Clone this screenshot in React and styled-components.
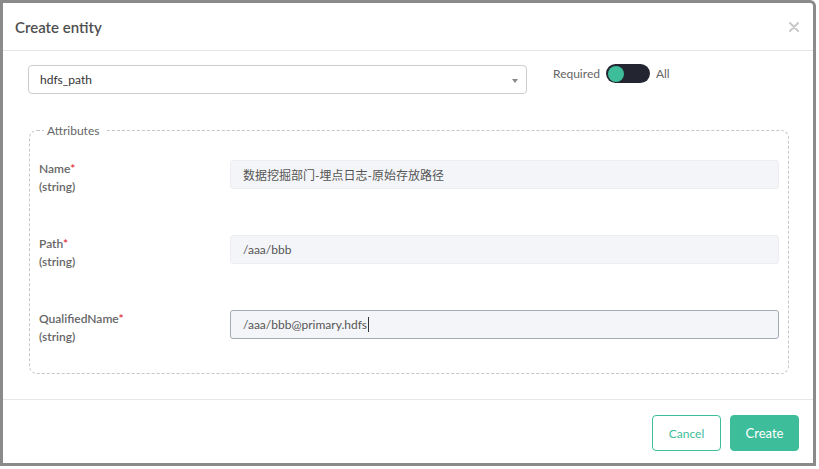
import React from "react";
import styled, { createGlobalStyle } from "styled-components";

const GlobalStyle = createGlobalStyle`
	html, body {
		margin: 0;
		padding: 0;
		background: #ffffff;
	}
	body {
		font-family: Lato, "Noto Sans", "Noto Sans CJK SC", sans-serif;
		color: #555;
	}
`;

const ACCENT = "#3dbd9a";

const fields = [
	{ name: "Name", type: "string", value: "数据挖掘部门-埋点日志-原始存放路径" },
	{ name: "Path", type: "string", value: "/aaa/bbb" },
	{ name: "QualifiedName", type: "string", value: "/aaa/bbb@primary.hdfs", focused: true },
];

const App = () => {
	return (
		<>
			<GlobalStyle />
			<Frame>
				<Modal>
					<Header>
						<Title>Create entity</Title>
						<CloseButton aria-label="Close">
							<svg width="10" height="10" viewBox="0 0 10 10">
								<path d="M1 1 L9 9 M9 1 L1 9" stroke="#c9c9c9" strokeWidth="2" strokeLinecap="round" />
							</svg>
						</CloseButton>
					</Header>

					<Body>
						<TopRow>
							<Select>
								<span>hdfs_path</span>
								<Caret />
							</Select>
							<ToggleGroup>
								<ToggleLabel>Required</ToggleLabel>
								<Toggle>
									<Knob />
								</Toggle>
								<ToggleLabel>All</ToggleLabel>
							</ToggleGroup>
						</TopRow>

						<Attributes>
							<Legend>Attributes</Legend>
							{fields.map((f) => (
								<FieldRow key={f.name}>
									<FieldLabel>
										<span>
											{f.name}
											<Required>*</Required>
										</span>
										<span>({f.type})</span>
									</FieldLabel>
									<FieldBox $focused={f.focused}>
										{f.value}
										{f.focused && <TextCursor />}
									</FieldBox>
								</FieldRow>
							))}
						</Attributes>
					</Body>

					<Footer>
						<Button>Cancel</Button>
						<Button $primary>Create</Button>
					</Footer>
				</Modal>
			</Frame>
		</>
	);
};

export default App;

const Frame = styled.div`
	width: 816px;
	height: 466px;
	box-sizing: border-box;
	border: 3px solid #8a8a8a;
	border-top-right-radius: 6px;
	background: #ffffff;
	overflow: hidden;
`;

const Modal = styled.div`
	display: flex;
	flex-direction: column;
	height: 100%;
`;

const Header = styled.div`
	height: 48px;
	box-sizing: border-box;
	display: flex;
	align-items: center;
	justify-content: space-between;
	padding: 0 13px 0 12px;
	border-bottom: 1px solid #e6e6e6;
`;

const Title = styled.h4`
	margin: 0;
	font-size: 15px;
	font-weight: 600;
	color: #4f4f4f;
`;

const CloseButton = styled.span`
	display: flex;
	align-items: center;
	justify-content: center;
	width: 12px;
	height: 12px;
`;

const Body = styled.div`
	flex: 1;
	padding: 14px 24px 0 25px;
`;

const TopRow = styled.div`
	display: flex;
	align-items: flex-start;
`;

const Select = styled.div`
	width: 499px;
	height: 29px;
	box-sizing: border-box;
	border: 1px solid #cccccc;
	border-radius: 4px;
	display: flex;
	align-items: center;
	justify-content: space-between;
	padding: 0 8px 0 11px;
	font-size: 12px;
	color: #333;
`;

const Caret = styled.span`
	width: 0;
	height: 0;
	border-left: 3px solid transparent;
	border-right: 3px solid transparent;
	border-top: 4px solid #888;
	margin-top: 2px;
`;

const ToggleGroup = styled.div`
	display: flex;
	align-items: center;
	gap: 6px;
	margin-left: 26px;
	margin-top: -1px;
`;

const ToggleLabel = styled.span`
	font-size: 12px;
	color: #666;
`;

const Toggle = styled.span`
	width: 44px;
	height: 19px;
	border-radius: 10px;
	background: #232530;
	display: flex;
	align-items: center;
	padding: 0 2px;
	box-sizing: border-box;
`;

const Knob = styled.span`
	width: 16px;
	height: 16px;
	border-radius: 50%;
	background: ${ACCENT};
`;

const Attributes = styled.fieldset`
	margin: 29px 0 0 1px;
	padding: 22px 9px 27px 9px;
	border: 1px dashed #c6c6c6;
	border-radius: 8px;
	width: 760px;
	box-sizing: border-box;
	display: flex;
	flex-direction: column;
	gap: 39px;
`;

const Legend = styled.legend`
	margin-left: 5px;
	padding: 0 8px 0 3px;
	font-size: 12px;
	color: #666;
`;

const FieldRow = styled.div`
	display: flex;
	align-items: flex-start;
`;

const FieldLabel = styled.div`
	width: 191px;
	display: flex;
	flex-direction: column;
	font-size: 12px;
	font-weight: 600;
	line-height: 18px;
	color: #666;
`;

const Required = styled.span`
	color: #e02d3c;
`;

const FieldBox = styled.div`
	flex: 1;
	height: 29px;
	box-sizing: border-box;
	display: flex;
	align-items: center;
	padding: 0 12px;
	background: #f4f5f8;
	border: 1px solid ${({ $focused }) => ($focused ? "#a3abb5" : "#eceef2")};
	border-radius: 3px;
	font-size: 12px;
	color: #555;
`;

const TextCursor = styled.span`
	display: inline-block;
	width: 1px;
	height: 15px;
	background: #333;
	margin-left: 1px;
`;

const Footer = styled.div`
	display: flex;
	justify-content: flex-end;
	gap: 9px;
	padding: 15px 14px 12px;
	border-top: 1px solid #e6e6e6;
`;

const Button = styled.button`
	width: 69px;
	height: 36px;
	border-radius: 4px;
	font-family: inherit;
	font-size: ${({ $primary }) => ($primary ? "13px" : "12px")};
	cursor: pointer;
	border: 1px solid ${ACCENT};
	background: ${({ $primary }) => ($primary ? ACCENT : "#ffffff")};
	color: ${({ $primary }) => ($primary ? "#ffffff" : ACCENT)};
`;
